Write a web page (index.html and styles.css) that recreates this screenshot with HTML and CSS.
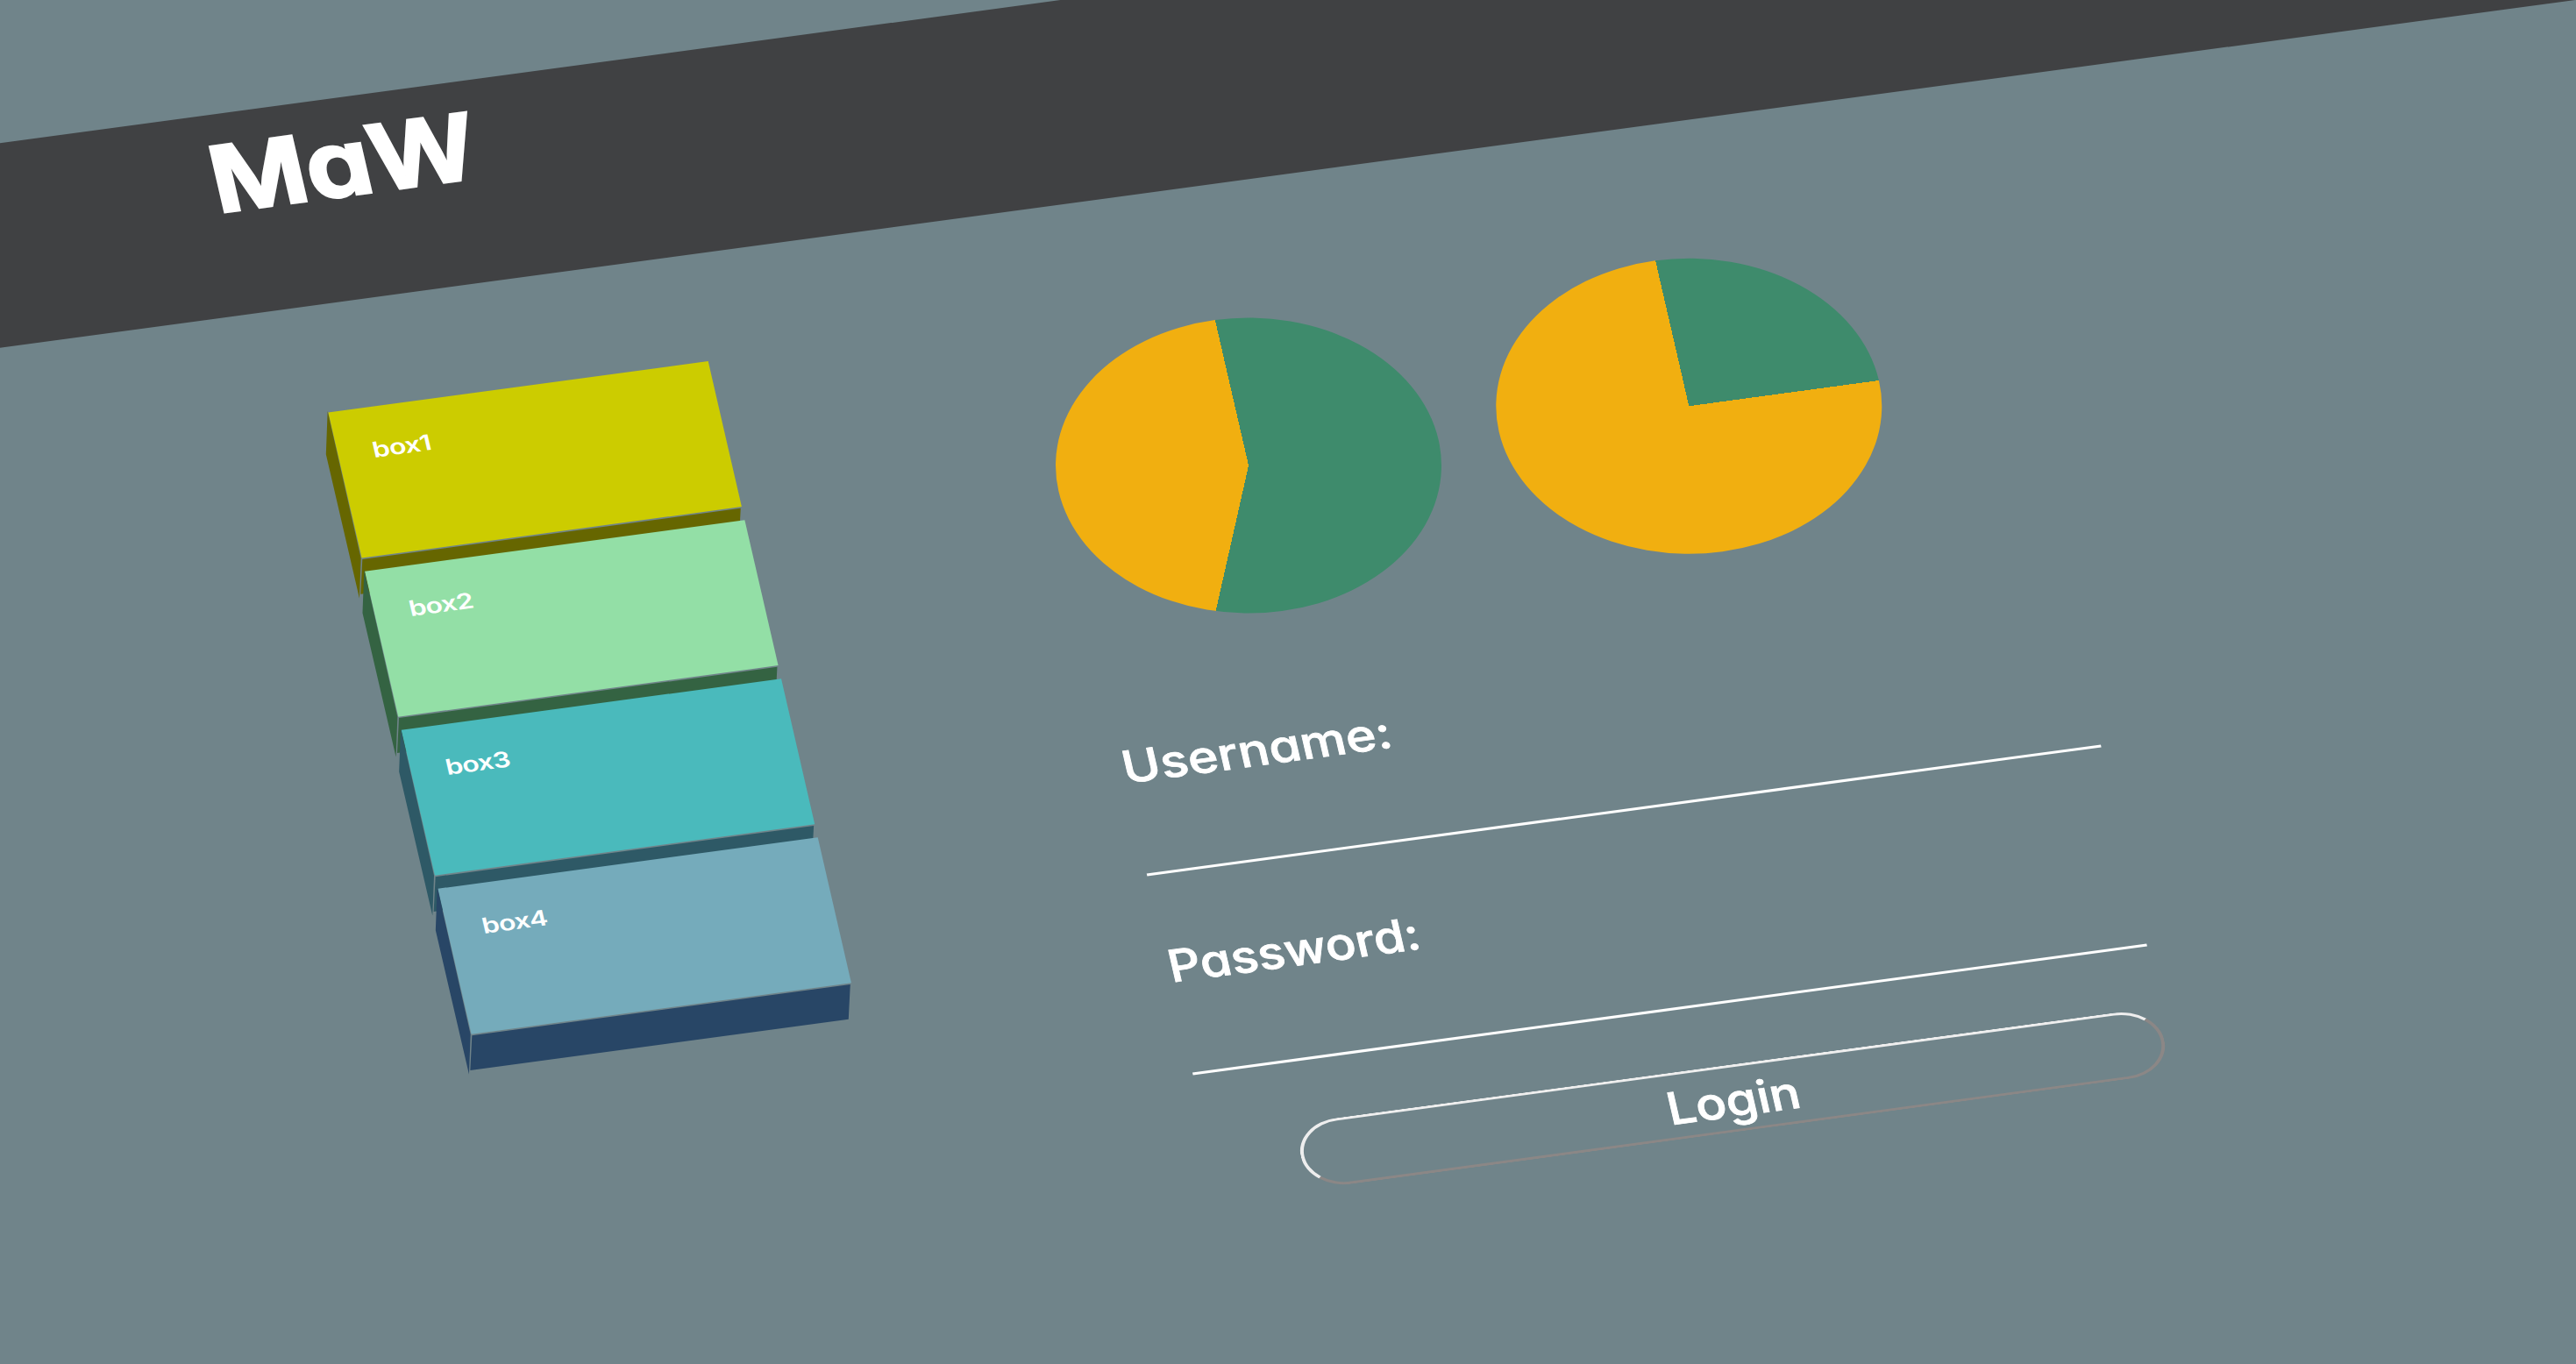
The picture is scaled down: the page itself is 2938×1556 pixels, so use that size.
FILE: index.html
```html
<!DOCTYPE html>
<html lang="en">
<head>
<meta charset="utf-8">
<title>MaW</title>
<link rel="stylesheet" href="styles.css">
</head>
<body>
<div class="viewport">
<div class="plane">
  <header class="header"><h1 class="logo">MaW</h1></header>
  <main class="main">
    <nav class="boxes">
      <div class="box box-yellow">
        <svg class="sides" viewBox="0 0 440 220"><path d="M-.3-2.3-13.3 60.7-13 278.5-.9 220zM.4 222H438.5L427.5 272.8H-10.6z"/></svg>
        <span class="caption">box1</span>
      </div>
      <div class="box box-mint">
        <svg class="sides" viewBox="0 0 440 220"><path d="M-.3-2.3-13.3 60.7-13 278.5-.9 220zM.4 222H438.5L427.5 272.8H-10.6z"/></svg>
        <span class="caption">box2</span>
      </div>
      <div class="box box-teal">
        <svg class="sides" viewBox="0 0 440 220"><path d="M-.3-2.3-13.3 60.7-13 278.5-.9 220zM.4 222H438.5L427.5 272.8H-10.6z"/></svg>
        <span class="caption">box3</span>
      </div>
      <div class="box box-blue">
        <svg class="sides" viewBox="0 0 440 220"><path d="M-.3-2.3-13.3 60.7-13 278.5-.9 220zM.4 222H438.5L427.5 272.8H-10.6z"/></svg>
        <span class="caption">box4</span>
      </div>
    </nav>
    <section class="content">
      <div class="charts">
        <div class="pie pie-large"></div>
        <div class="pie pie-quarter"></div>
      </div>
      <form class="login">
        <div class="field"><label class="label user">Username:</label></div>
        <div class="field"><label class="label pass">Password:</label></div>
        <button class="submit" type="button"><span class="submit-text">Login</span></button>
      </form>
    </section>
  </main>
</div>
</div>
</body>
</html>
```
FILE: styles.css
```css
html, body {
  margin: 0;
  width: 100%;
  height: 100%;
  overflow: hidden;
  background: #70848a;
}

body {
  color: #fff;
  font-family: "Comic Sans MS", Inter, sans-serif;
  font-feature-settings: "cv11" 1;
}

.viewport {
  width: 100%;
  height: 100%;
  overflow: clip;
}

/* The whole page is a sheet tilted back 40deg and turned by -10deg */
.plane {
  width: 3400px;
  height: 1900px;
  transform-origin: 0 0;
  transform: matrix(0.98481, -0.13302, 0.17365, 0.75441, -296.4, 203.4);
}

.header {
  height: 300px;
  padding-left: 528px;
  background: #404143;
}

.logo {
  width: max-content;
  margin: 0;
  font-size: 134px;
  line-height: 192px;
  font-weight: 600;
  letter-spacing: 0;
  -webkit-text-stroke: 5px #fff;
  transform: scaleX(0.89);
  transform-origin: 0 0;
}

.main {
  display: flex;
  gap: 360px;
  padding: 160px 0 0 600px;
}

.boxes {
  display: flex;
  flex-direction: column;
  gap: 20px;
}

.box {
  position: relative;
  box-sizing: border-box;
  width: 440px;
  height: 220px;
  padding: 44px 0 0 40px;
  font-size: 32px;
  line-height: 40px;
  font-weight: 600;
}

.caption {
  letter-spacing: -0.8px;
}

.sides {
  position: absolute;
  left: 0;
  top: 0;
  width: 440px;
  height: 220px;
  overflow: visible;
}

.box-yellow { background: #cccc00; }
.box-yellow .sides { fill: #666600; }
.box-mint { background: #93dfa6; }
.box-mint .sides { fill: #346342; }
.box-teal { background: #4ababc; }
.box-teal .sides { fill: #2e5966; }
.box-blue { background: #75abbb; }
.box-blue .sides { fill: #284666; }

.content {
  padding-top: 40px;
}

.charts {
  display: flex;
  gap: 70px;
}

.pie {
  width: 440px;
  height: 440px;
  border-radius: 50%;
}

.pie-large { background: conic-gradient(#3e8b6c 199.8deg, #f1af10 0); }
.pie-quarter { background: conic-gradient(#3e8b6c 90deg, #f1af10 0); }

.login {
  display: flex;
  flex-direction: column;
  width: 1105px;
  margin-top: 61px;
}

.field {
  box-sizing: border-box;
  height: 301px;
  padding-top: 97px;
  border-bottom: 4px solid #fff;
}

.label {
  display: block;
  width: max-content;
  font-size: 66px;
  line-height: 80px;
  font-weight: 500;
  transform-origin: 0 0;
  -webkit-text-stroke: 1px #fff;
}

.user { transform: scaleX(0.895); }
.pass { transform: scaleX(0.875); }

.submit {
  box-sizing: border-box;
  width: 1000px;
  height: 100px;
  margin: 91px 0 0 100px;
  padding: 6px 0 0;
  border: 4px solid;
  border-color: #eee #8b8786 #8b8786 #eee;
  border-radius: 50px;
  background: none;
  color: inherit;
  font: inherit;
  font-feature-settings: inherit;
  font-size: 66px;
  line-height: 80px;
  font-weight: 500;
}

.submit-text {
  display: inline-block;
  transform: scaleX(0.88);
  -webkit-text-stroke: 1px #fff;
}
```
